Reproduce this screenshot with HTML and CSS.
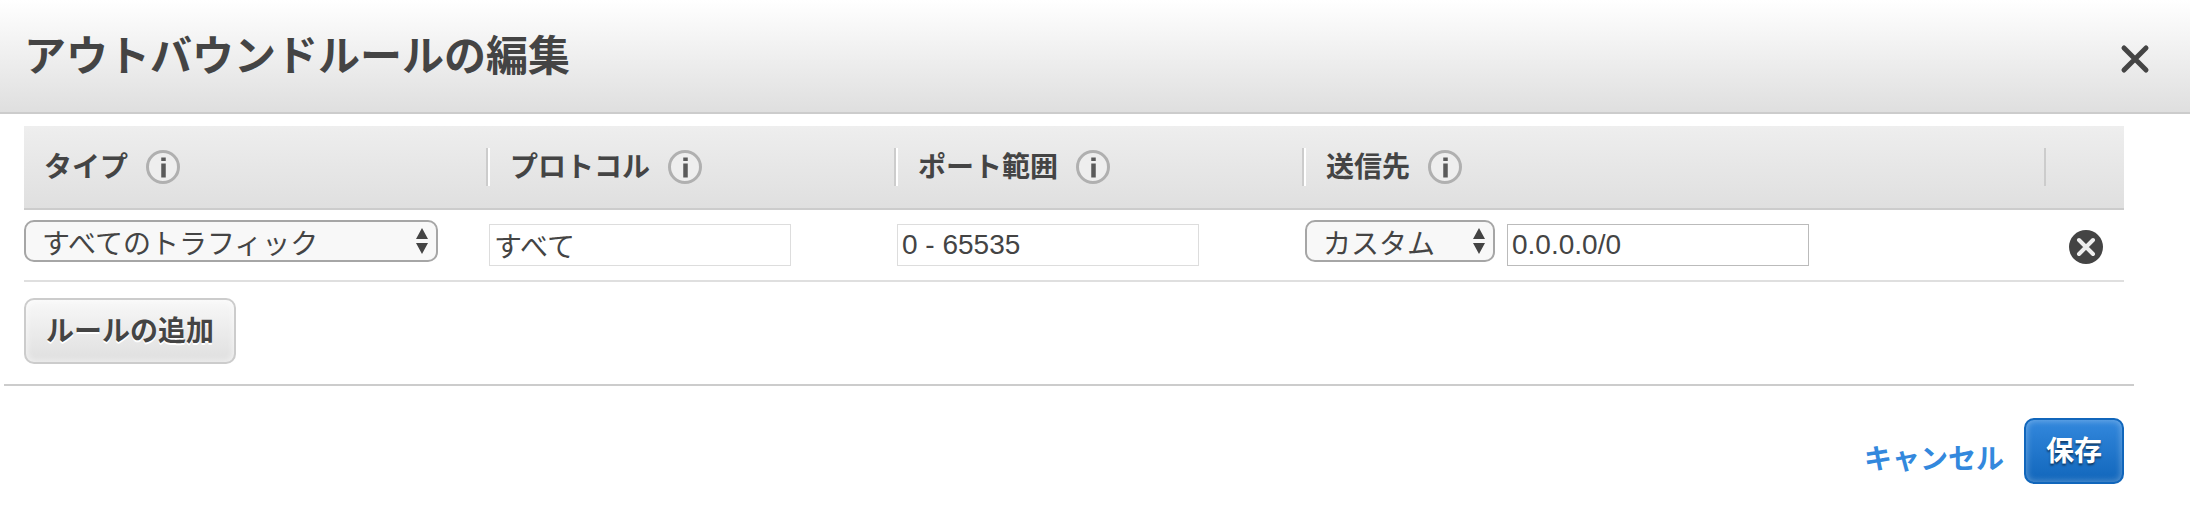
FILE: index.html
```html
<!DOCTYPE html>
<html lang="ja">
<head>
  <meta charset="utf-8">
  <meta name="viewport" content="width=device-width, initial-scale=1">
  <title>アウトバウンドルールの編集</title>
  <link rel="stylesheet" href="styles.css">
</head>
<body>

<svg class="sprite" aria-hidden="true">
  <symbol id="icon-info" viewBox="0 0 34 34">
    <circle cx="17" cy="17" r="15.5" fill="#eee" stroke="#b0b0b0" stroke-width="3"/>
    <path d="M17.500 13.500v14M17.500 7.500v3.500" stroke="#5a5a5a" stroke-width="4.500"/>
  </symbol>
  <symbol id="icon-arrows" viewBox="0 0 14 26">
    <path d="M7 0l6 11H1zM7 26l6-11H1z" fill="#444"/>
  </symbol>
</svg>

<header class="dialog-header">
  <h1 class="dialog-title">アウトバウンドルールの編集</h1>
  <button type="button" class="icon-btn close-btn" aria-label="閉じる">
    <svg width="30" height="30" viewBox="0 0 30 30"><path d="M4 4l22 22M26 4L4 26" stroke="#444" stroke-width="5" stroke-linecap="round"/></svg>
  </button>
</header>

<form>
  <main class="rules">
    <table class="rules-table">
      <colgroup>
        <col class="col-type">
        <col class="col-protocol">
        <col class="col-port">
        <col class="col-dest">
        <col class="col-remove">
      </colgroup>
      <thead>
        <tr>
          <th><div class="heading"><span id="type-label">タイプ</span><button type="button" class="icon-btn" aria-label="タイプの情報"><svg width="34" height="34"><use href="#icon-info"/></svg></button></div></th>
          <th><div class="heading"><span id="protocol-label">プロトコル</span><button type="button" class="icon-btn" aria-label="プロトコルの情報"><svg width="34" height="34"><use href="#icon-info"/></svg></button></div></th>
          <th><div class="heading"><span id="port-label">ポート範囲</span><button type="button" class="icon-btn" aria-label="ポート範囲の情報"><svg width="34" height="34"><use href="#icon-info"/></svg></button></div></th>
          <th><div class="heading"><span id="dest-label">送信先</span><button type="button" class="icon-btn" aria-label="送信先の情報"><svg width="34" height="34"><use href="#icon-info"/></svg></button></div></th>
          <th><div class="heading heading-empty"></div></th>
        </tr>
      </thead>
      <tbody>
        <tr>
          <td>
            <div class="select select-type">
              <select name="type" aria-labelledby="type-label">
                <option>すべてのトラフィック</option>
              </select>
              <svg class="arrows" width="14" height="26"><use href="#icon-arrows"/></svg>
            </div>
          </td>
          <td><input class="text-input" type="text" name="protocol" value="すべて" aria-labelledby="protocol-label" readonly></td>
          <td><input class="text-input" type="text" name="port" value="0 - 65535" aria-labelledby="port-label" readonly></td>
          <td>
            <div class="destination">
              <div class="select select-dest">
                <select name="dest-kind" aria-labelledby="dest-label">
                  <option>カスタム</option>
                </select>
                <svg class="arrows" width="14" height="26"><use href="#icon-arrows"/></svg>
              </div>
              <input class="text-input editable" type="text" name="dest" value="0.0.0.0/0" aria-labelledby="dest-label">
            </div>
          </td>
          <td>
            <button type="button" class="icon-btn remove-btn" aria-label="ルールの削除">
              <svg width="36" height="36" viewBox="0 0 36 36"><circle cx="18" cy="18" r="17" fill="#444"/><path d="M11 11l14 14M25 11L11 25" stroke="#eee" stroke-width="4" stroke-linecap="round"/></svg>
            </button>
          </td>
        </tr>
      </tbody>
    </table>
    <button type="button" class="btn btn-default">ルールの追加</button>
  </main>

  <footer class="dialog-footer">
    <a class="cancel" href="#">キャンセル</a>
    <button type="submit" class="btn btn-primary">保存</button>
  </footer>
</form>

</body>
</html>
```

FILE: styles.css
```css
*,
*::before,
*::after {
  box-sizing: border-box;
}

body {
  margin: 0;
  background: #fff;
  color: #444;
  font-family: "Liberation Sans", "Noto Sans CJK JP", sans-serif;
  font-size: 28px;
  line-height: 38px;
}

button,
input,
select {
  font: inherit;
  color: inherit;
}

svg {
  display: block;
}

.sprite {
  position: absolute;
  width: 0;
  height: 0;
}

.icon-btn {
  flex: none;
  padding: 0;
  border: none;
  background: none;
  cursor: pointer;
}

/* header */
.dialog-header {
  display: flex;
  align-items: center;
  justify-content: space-between;
  height: 114px;
  padding: 2px 40px 0 24px;
  border-bottom: 2px solid #ccc;
  background: linear-gradient(#fff, #dfdfdf);
}

.dialog-title {
  margin: 0;
  font-size: 42px;
  line-height: 56px;
}

.close-btn {
  margin-top: 4px;
}

/* rules table */
.rules {
  padding: 12px 66px 20px 24px;
}

.rules-table {
  width: 100%;
  margin-bottom: 16px;
  table-layout: fixed;
  border-collapse: separate;
  border-spacing: 0;
}

.col-type {
  width: 462px;
}

.col-protocol,
.col-port {
  width: 408px;
}

.col-remove {
  width: 80px;
}

.rules-table thead {
  background: linear-gradient(#eee, #dfdfdf);
}

.rules-table th {
  padding: 22px 0;
  border-bottom: 2px solid #ccc;
  text-align: left;
}

.heading {
  display: flex;
  align-items: center;
  gap: 18px;
  height: 38px;
  padding-left: 22px;
  border-left: 2px solid #ccc;
  box-shadow: inset 2px 0 #fff;
}

.heading span {
  padding-top: 2px;
}

th:first-child .heading {
  padding-left: 20px;
  border-left: none;
  box-shadow: none;
}

.heading-empty {
  box-shadow: none;
}

.rules-table td {
  padding: 10px 0 10px 3px;
  border-bottom: 2px solid #dfdfdf;
  vertical-align: middle;
}

.rules-table td:first-child {
  padding-left: 0;
}

.destination {
  display: flex;
  align-items: center;
  gap: 12px;
}

.text-input {
  display: block;
  width: 302px;
  height: 42px;
  padding: 0 4px;
  border: 1px solid #ddd;
  background: #fff;
}

.text-input.editable {
  border-color: #bbb;
}

.select {
  position: relative;
  margin-bottom: 8px;
}

.select select {
  display: block;
  width: 100%;
  height: 42px;
  padding: 4px 32px 0 16px;
  border: 2px solid #a6a6a6;
  border-radius: 10px;
  background: #f8f8f8;
  appearance: none;
}

.select-type {
  width: 414px;
}

.select-dest {
  width: 190px;
}

.arrows {
  position: absolute;
  top: 8px;
  right: 9px;
  pointer-events: none;
}

.remove-btn {
  display: block;
  margin: 4px auto 0;
}

/* buttons */
.btn {
  display: block;
  height: 66px;
  padding: 2px 20px 0;
  border: 2px solid #ccc;
  border-radius: 10px;
  font-weight: bold;
  cursor: pointer;
}

.btn-default {
  background: linear-gradient(#f8f8f8, #dfdfdf);
  box-shadow: inset 0 0 6px 1px rgba(255, 255, 255, 0.6);
  text-shadow: 0 2px 0 #fff;
}

.btn-primary {
  border-color: #1166bb;
  background: linear-gradient(#3388dd, #1166bb);
  box-shadow: inset 0 0 6px 1px rgba(255, 255, 255, 0.3);
  color: #fff;
  text-shadow: 0 2px 2px rgba(0, 0, 0, 0.5);
}

/* footer */
.dialog-footer {
  display: flex;
  align-items: center;
  justify-content: flex-end;
  gap: 20px;
  margin: 0 56px 0 4px;
  padding: 32px 10px 28px 0;
  border-top: 2px solid #ccc;
}

.cancel {
  margin-top: 18px;
  color: #3388dd;
  font-weight: bold;
  text-decoration: none;
}
```
